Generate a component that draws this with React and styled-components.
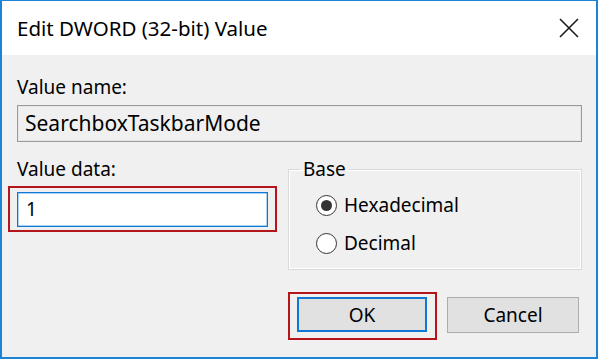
import React from "react";
import styled, { createGlobalStyle } from "styled-components";

const Global = createGlobalStyle`
  html, body { margin: 0; padding: 0; background: #ffffff; }
  body { font-family: "Noto Sans", "Open Sans", sans-serif; color: #000; }
  * { box-sizing: border-box; }
`;

const Window = styled.div`
  width: 598px;
  height: 359px;
  border-top: 1px solid #1c84d6;
  border-left: 2px solid #1c84d6;
  border-right: 2px solid #1c84d6;
  border-bottom: 2px solid #1c84d6;
  background: #f0f0f0;
  display: flex;
  flex-direction: column;
`;

const TitleBar = styled.div`
  height: 54px;
  background: #ffffff;
  display: flex;
  align-items: center;
  justify-content: space-between;
  padding: 0 16px 0 15px;
`;

const Title = styled.div`
  font-size: 20.5px;
  line-height: 24px;
  color: #000;
`;

const Close = styled.div`
  width: 22px;
  height: 22px;
  display: flex;
  align-items: center;
  justify-content: center;
`;

const Body = styled.div`
  padding: 20px 14px 0 15px;
  display: flex;
  flex-direction: column;
`;

const Label = styled.div`
  font-size: 19px;
  line-height: 24px;
  height: 24px;
`;

const ReadField = styled.div`
  margin-top: 6px;
  height: 37px;
  border: 1px solid #9a9a9a;
  box-shadow: inset 0 0 0 1px #e6e6e6;
  background: #f0f0f0;
  font-size: 21px;
  line-height: 35px;
  padding-left: 7px;
`;

const Columns = styled.div`
  margin-top: 15px;
  display: grid;
  grid-template-columns: 251px 294px;
  column-gap: 20px;
`;

const Column = styled.div`
  display: flex;
  flex-direction: column;
`;

const Highlight = styled.div`
  position: relative;
  display: flex;
  &::after {
    content: "";
    position: absolute;
    top: ${(p) => p.$t}px;
    bottom: ${(p) => p.$b}px;
    left: ${(p) => p.$l}px;
    right: ${(p) => p.$r}px;
    border: 2px solid #b3151b;
    pointer-events: none;
  }
`;

const TextInput = styled.div`
  margin-top: 11px;
  width: 251px;
  height: 35px;
  border: 1px solid #0f78d4;
  box-shadow: inset 0 0 0 0.5px #5aa5e6;
  background: #fff;
  font-size: 19px;
  line-height: 33px;
  padding-left: 8px;
`;

const GroupBox = styled.fieldset`
  margin: 0;
  padding: 0;
  height: 113px;
  border: 1px solid #d9d9d9;
  box-shadow: inset 0 0 0 1px #ffffff;
  display: flex;
  flex-direction: column;
`;

const Legend = styled.legend`
  font-size: 19px;
  line-height: 24px;
  padding: 0 3px;
  margin-left: 11px;
`;

const RadioRow = styled.label`
  display: flex;
  align-items: center;
  height: 38px;
  gap: 7px;
  padding-left: 27px;
  font-size: 19px;
  margin-top: ${(p) => p.$mt || 0}px;
`;

const RadioCircle = styled.span`
  width: 21px;
  height: 21px;
  border-radius: 50%;
  border: 1.5px solid #333;
  background: #fff;
  display: flex;
  align-items: center;
  justify-content: center;
  &::after {
    content: "";
    display: ${(p) => (p.$checked ? "block" : "none")};
    width: 11px;
    height: 11px;
    border-radius: 50%;
    background: #333;
  }
`;

const Buttons = styled.div`
  margin-top: 27px;
  display: flex;
  justify-content: flex-end;
  gap: 20px;
  padding-right: 3px;
`;

const Button = styled.div`
  width: ${(p) => p.$w}px;
  height: ${(p) => p.$h}px;
  background: #e1e1e1;
  border: ${(p) => (p.$primary ? "2px solid #0f78d4" : "1px solid #adadad")};
  display: flex;
  align-items: center;
  justify-content: center;
  font-size: 19px;
`;

export default function App() {
  return (
    <>
      <Global />
      <Window>
        <TitleBar>
          <Title>Edit DWORD (32-bit) Value</Title>
          <Close>
            <svg width="20" height="20" viewBox="0 0 20 20">
              <path d="M1 1 L19 19 M19 1 L1 19" stroke="#1a1a1a" strokeWidth="1.6" fill="none" />
            </svg>
          </Close>
        </TitleBar>
        <Body>
          <Label>Value name:</Label>
          <ReadField>SearchboxTaskbarMode</ReadField>
          <Columns>
            <Column>
              <Label>Value data:</Label>
              <Highlight $t={5} $b={-5} $l={-9} $r={-9}>
                <TextInput>1</TextInput>
              </Highlight>
            </Column>
            <GroupBox>
              <Legend>Base</Legend>
              <RadioRow $mt={5}>
                <RadioCircle $checked />
                Hexadecimal
              </RadioRow>
              <RadioRow>
                <RadioCircle />
                Decimal
              </RadioRow>
            </GroupBox>
          </Columns>
          <Buttons>
            <Highlight $t={-5} $b={-7} $l={-9} $r={-10}>
              <Button $primary $w={130} $h={35}>OK</Button>
            </Highlight>
            <Button $w={132} $h={36}>Cancel</Button>
          </Buttons>
        </Body>
      </Window>
    </>
  );
}
